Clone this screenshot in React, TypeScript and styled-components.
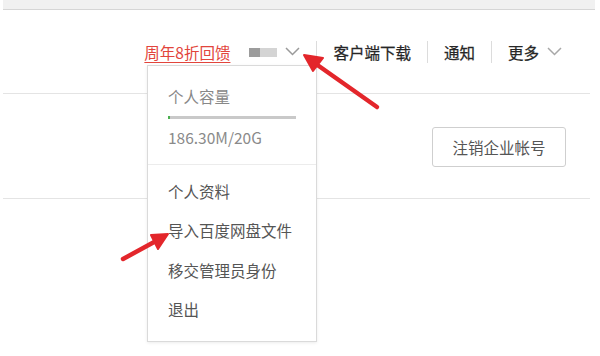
import styled, { createGlobalStyle } from 'styled-components'

const GlobalStyle = createGlobalStyle`
  html, body {
    margin: 0;
    padding: 0;
    background: #ffffff;
  }
  body {
    font-family: "Noto Sans CJK SC", "Noto Sans", "Liberation Sans", sans-serif;
  }
`

const Page = styled.div`
  position: relative;
  width: 600px;
  height: 356px;
  overflow: hidden;
  background: #ffffff;
`

const TopBand = styled.div`
  height: 9px;
  margin: 0 5px 0 3px;
  background: #f1f1f1;
  border-bottom: 1px solid #d6d6d6;
`

const Header = styled.header`
  height: 83px;
  margin: 0 10px 0 3px;
  border-bottom: 1px solid #e4e4e4;
  display: flex;
  align-items: center;
  justify-content: flex-end;
  padding-right: 28px;
`

const Nav = styled.nav`
  display: flex;
  align-items: center;
  height: 22px;
`

const PromoLink = styled.a`
  color: #e2453c;
  font-size: 15.5px;
  text-decoration: underline;
  text-underline-offset: 3px;
  margin-right: 19px;
`

const UserBox = styled.div`
  display: flex;
  align-items: center;
  gap: 8px;
  margin-right: 16px;
`

const Avatar = styled.div`
  width: 28px;
  height: 9px;
  display: flex;
  margin-top: 2px;
`

const AvatarPart = styled.span<{ $tone: string; $w: number }>`
  width: ${({ $w }) => $w}px;
  height: 100%;
  background: ${({ $tone }) => $tone};
`

const Sep = styled.span`
  width: 1px;
  height: 22px;
  background: #dcdcdc;
`

const NavItem = styled.a`
  color: #262626;
  font-size: 15.5px;
  font-weight: 400;
  -webkit-text-stroke: 0.25px #262626;
  padding: 0 16px;
  display: flex;
  align-items: center;
  gap: 8px;

  &:last-child {
    padding-right: 0;
  }
`

const Section = styled.section`
  height: 104px;
  margin: 0 10px 0 3px;
  border-bottom: 1px solid #e4e4e4;
  display: flex;
  align-items: center;
  justify-content: flex-end;
  padding-right: 24px;
`

const OutlineButton = styled.button`
  width: 134px;
  height: 40px;
  border: 1px solid #cfcfcf;
  border-radius: 3px;
  background: #ffffff;
  color: #555555;
  font-family: inherit;
  font-size: 15.5px;
  margin-top: 1px;
`

const Dropdown = styled.div`
  position: absolute;
  left: 147px;
  top: 65px;
  width: 168px;
  height: 275px;
  background: #ffffff;
  border: 1px solid #dadada;
  box-shadow: 0 1px 3px rgba(0, 0, 0, 0.08);
  display: flex;
  flex-direction: column;
`

const Quota = styled.div`
  padding: 18px 20px 15px;
  border-bottom: 1px solid #ececec;
  display: flex;
  flex-direction: column;
`

const QuotaLabel = styled.div`
  color: #888888;
  font-size: 15.5px;
  line-height: 24px;
`

const QuotaBar = styled.div`
  width: 128px;
  height: 3px;
  background: #c9c9c9;
  margin: 8px 0 6px;
  display: flex;
`

const QuotaFill = styled.span`
  height: 100%;
  background: #4caf50;
`

const QuotaText = styled.div`
  color: #8a8a8a;
  font-size: 15.5px;
  line-height: 24px;
`

const MenuList = styled.ul`
  list-style: none;
  margin: 0;
  padding: 14px 0 0;
`

const MenuItem = styled.li`
  color: #555555;
  font-size: 15.5px;
  line-height: 24px;
  padding: 0 20px;
  margin-bottom: 15.3px;
`

const Overlay = styled.svg`
  position: absolute;
  left: 0;
  top: 0;
  pointer-events: none;
`

const Chevron = ({ color = '#9a9a9a' }: { color?: string }) => (
  <svg width="15" height="9" viewBox="0 0 15 9">
    <polyline points="1,1 7.5,7.5 14,1" fill="none" stroke={color} strokeWidth="1.5" />
  </svg>
)

const menu = ['个人资料', '导入百度网盘文件', '移交管理员身份', '退出']

export default function App() {
  const used = 186.3
  const total = 20 * 1024

  return (
    <Page>
      <GlobalStyle />
      <TopBand />
      <Header>
        <Nav>
          <PromoLink>周年8折回馈</PromoLink>
          <UserBox>
            <Avatar>
              <AvatarPart $tone="#9c9c9c" $w={11} />
              <AvatarPart $tone="#d4d4d4" $w={17} />
            </Avatar>
            <Chevron />
          </UserBox>
          <Sep />
          <NavItem>客户端下载</NavItem>
          <Sep />
          <NavItem>通知</NavItem>
          <Sep />
          <NavItem>
            更多
            <Chevron color="#a8a8a8" />
          </NavItem>
        </Nav>
      </Header>
      <Section>
        <OutlineButton>注销企业帐号</OutlineButton>
      </Section>

      <Dropdown>
        <Quota>
          <QuotaLabel>个人容量</QuotaLabel>
          <QuotaBar>
            <QuotaFill style={{ width: `${Math.max(2, (used / total) * 128)}px` }} />
          </QuotaBar>
          <QuotaText>186.30M/20G</QuotaText>
        </Quota>
        <MenuList>
          {menu.map((m) => (
            <MenuItem key={m}>{m}</MenuItem>
          ))}
        </MenuList>
      </Dropdown>

      <Overlay width="600" height="356" viewBox="0 0 600 356">
        <g stroke="#e3262b" strokeWidth="4.5" strokeLinecap="round" fill="#e3262b">
          <line x1="377" y1="107" x2="316" y2="64" />
          <polygon points="304,55 323,58 313,71" strokeWidth="2" strokeLinejoin="round" />
          <line x1="123" y1="259" x2="156" y2="241" />
          <polygon points="168,234 151,235 158,249" strokeWidth="2" strokeLinejoin="round" />
        </g>
      </Overlay>
    </Page>
  )
}
